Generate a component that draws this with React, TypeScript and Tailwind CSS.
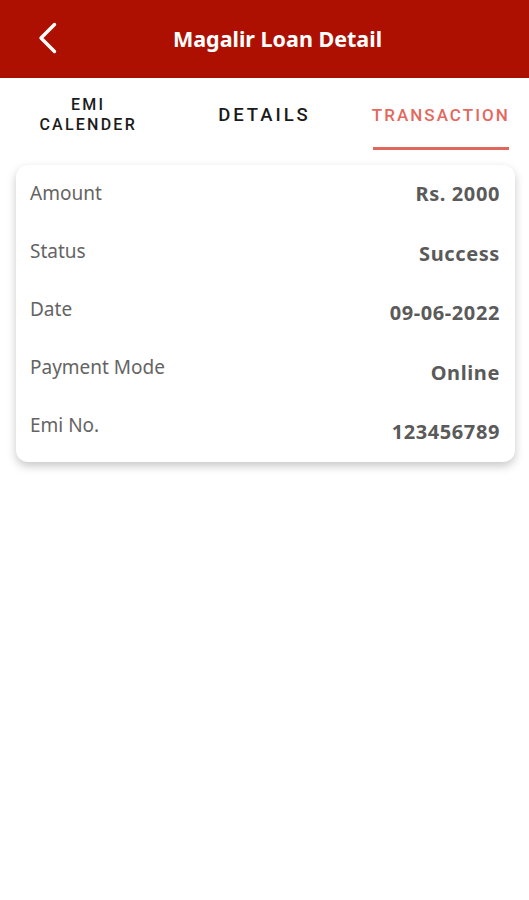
const labels = ["Amount", "Status", "Date", "Payment Mode", "Emi No."];
const values = ["Rs. 2000", "Success", "09-06-2022", "Online", "123456789"];

export default function App() {
  return (
    <div className="min-h-[900px] w-full bg-white" style={{ fontFamily: "'Noto Sans', sans-serif" }}>
      {/* Header */}
      <header className="relative flex h-[78px] items-center bg-[#ad1000]">
        <button className="absolute left-[36px] top-[20px]">
          <svg width="24" height="36" viewBox="0 0 24 36" fill="none" stroke="white" strokeWidth="3.4" strokeLinecap="round" strokeLinejoin="round">
            <polyline points="18.5,4.5 5,18 18.5,31.5" />
          </svg>
        </button>
        <h1 className="w-full pl-[26px] text-center text-[21.5px] font-bold text-white">Magalir Loan Detail</h1>
      </header>

      {/* Tabs */}
      <nav className="grid h-[72px] grid-cols-3" style={{ fontFamily: "Roboto, sans-serif" }}>
        <div className="flex flex-col items-center justify-center pt-[2px] text-[16px] font-medium leading-[20px] tracking-[0.14em] text-[#1b1b1b]">
          <span>EMI</span>
          <span>CALENDER</span>
        </div>
        <div className="flex items-center justify-center pt-[4px] text-[18.5px] font-medium tracking-[0.16em] text-[#1b1b1b]">
          DETAILS
        </div>
        <div className="flex flex-col items-center justify-end">
          <div className="flex flex-1 items-center pt-[6px] text-[17px] font-medium tracking-[0.12em] text-[#e3695e]">
            TRANSACTION
          </div>
          <div className="h-[3px] w-[136px] bg-[#e0675a]" />
        </div>
      </nav>

      {/* Card */}
      <div className="mx-[16px] mt-[15px] w-[499px] rounded-[12px] bg-white px-[14px] pb-[18px] pt-[16px] shadow-[0_4px_10px_rgba(0,0,0,0.22)]">
        <div className="flex justify-between leading-[24px]">
          <div className="flex flex-col gap-[34px] text-[19px] text-[#646464]">
            {labels.map((l) => (
              <span key={l}>{l}</span>
            ))}
          </div>
          <div className="flex flex-col items-end gap-[35.5px] pr-[1px] pt-[1px] text-[20px] font-bold tracking-[0.03em] text-[#5a5a5a]">
            {values.map((v) => (
              <span key={v}>{v}</span>
            ))}
          </div>
        </div>
      </div>
    </div>
  );
}
